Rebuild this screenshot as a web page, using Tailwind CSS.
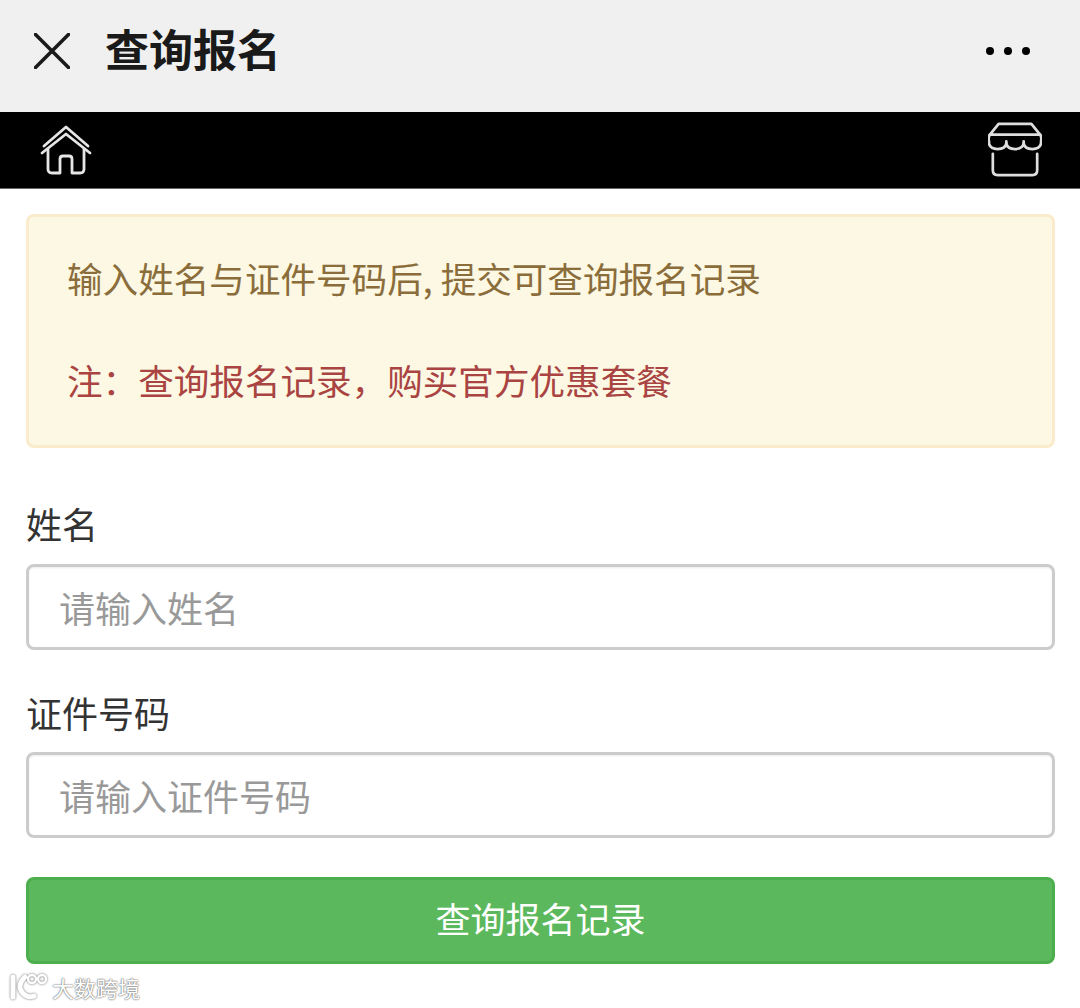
<!DOCTYPE html>
<html lang="zh-CN">

<head>
    <meta charset="UTF-8">
    <meta name="viewport" content="width=device-width, initial-scale=1.0">
    <title>查询报名</title>
    <script src="https://cdn.jsdelivr.net/npm/@tailwindcss/browser@4"></script>
</head>

<body class="relative h-[1008px] overflow-hidden bg-white font-['Noto_Sans_CJK_SC','Liberation_Sans',sans-serif] text-[#333]">
    <!-- Title bar -->
    <header class="flex h-[112px] items-center bg-[#f0f0f0] pb-[10px] pl-[34px] pr-[50px]">
        <svg class="h-[36px] w-[36px]" viewBox="0 0 36 36" fill="none" stroke="#1a1a1a" stroke-width="3.6" stroke-linecap="round">
            <path d="M1.5 1.5 L34.5 34.5 M34.5 1.5 L1.5 34.5" />
        </svg>
        <h1 class="ml-[35px] -mt-[7px] text-[44px] font-bold leading-none text-[#1a1a1a]">查询报名</h1>
        <div class="ml-auto flex gap-[10px]">
            <span class="h-[8px] w-[8px] rounded-full bg-black"></span>
            <span class="h-[8px] w-[8px] rounded-full bg-black"></span>
            <span class="h-[8px] w-[8px] rounded-full bg-black"></span>
        </div>
    </header>

    <!-- Black nav -->
    <nav class="flex h-[77px] items-center justify-between border-b border-[#666] bg-black pl-[40px] pr-[38px]">
        <svg class="h-[52px] w-[52px]" viewBox="0 0 52 52" fill="none" stroke="#e6e6e6" stroke-width="2.8" stroke-linecap="round" stroke-linejoin="round">
            <path d="M4 22 L26 3 L48 22" />
            <path d="M2 29 L26 10 L50 29" />
            <path d="M8 25 V45 Q8 49 12 49 H20 V35 Q20 32 23 32 H29 Q32 32 32 35 V49 H40 Q44 49 44 45 V25" />
        </svg>
        <svg class="h-[56px] w-[54px]" viewBox="0 0 56 58" fill="none" stroke="#dedede" stroke-width="2.8" stroke-linecap="round" stroke-linejoin="round">
            <path d="M2 13 L11 2 H45 L54 13 M2 13 H54" />
            <path d="M2 13 Q0 16 1 20 V22 Q2 28 10 28 Q18 28 19 22 Q20 28 28 28 Q36 28 37 22 Q38 28 46 28 Q54 28 55 22 V20 Q56 16 54 13" />
            <path d="M19 20 V22 M37 20 V22" />
            <path d="M5 33 V50 Q5 55 10 55 H46 Q51 55 51 50 V33" />
        </svg>
    </nav>

    <main class="px-[26px] pt-[25px] pr-[25px]">
        <!-- Notice -->
        <div class="h-[234px] rounded-[8px] border-[3px] border-[#faebcc] bg-[#fcf8e3] px-[38px] pt-[35px] text-[35.6px] leading-[51px] text-[#8a6d3b]">
            <p>输入姓名与证件号码后, 提交可查询报名记录</p>
            <p class="mt-[51px] text-[#a94442]">注：查询报名记录，购买官方优惠套餐</p>
        </div>

        <form>
            <label for="nombre" class="mt-[50px] block text-[36px] leading-[51px]">姓名</label>
            <input id="nombre" type="text" placeholder="请输入姓名" class="mt-[15px] block h-[86px] w-full rounded-[8px] border-[3px] border-[#ccc] bg-white px-[30px] text-[36px] shadow-[inset_0_1px_2px_rgba(0,0,0,0.08)] placeholder:text-[#999]">

            <label for="zhengjian" class="mt-[37px] block text-[36px] leading-[51px]">证件号码</label>
            <input id="zhengjian" type="text" placeholder="请输入证件号码" class="mt-[14px] block h-[86px] w-full rounded-[8px] border-[3px] border-[#ccc] bg-white px-[30px] text-[36px] shadow-[inset_0_1px_2px_rgba(0,0,0,0.08)] placeholder:text-[#999]">

            <button type="button" class="mt-[39px] block h-[87px] w-full rounded-[8px] border-[3px] border-[#4cae4c] bg-[#5cb85c] pb-[4px] text-[35px] text-white">查询报名记录</button>
        </form>
    </main>

    <!-- Watermark -->
    <div class="absolute bottom-[7px] left-[9px] flex items-center gap-[3px] text-white">
        <svg class="h-[28px] w-[40px] drop-shadow-[0_0_1px_#666]" viewBox="0 0 40 28" fill="none" stroke="#fff" stroke-linecap="round">
            <path d="M4 4 V24" stroke-width="5" />
            <path d="M16 4 Q6 14 16 22 Q20 25 25 23" stroke-width="5" />
            <circle cx="23" cy="6" r="4" stroke-width="2.4" />
            <circle cx="33" cy="6" r="4" stroke-width="2.4" />
        </svg>
        <span class="text-[22px] leading-none [text-shadow:0_0_2px_#666,0_0_1px_#666]">大数跨境</span>
    </div>
</body>

</html>
